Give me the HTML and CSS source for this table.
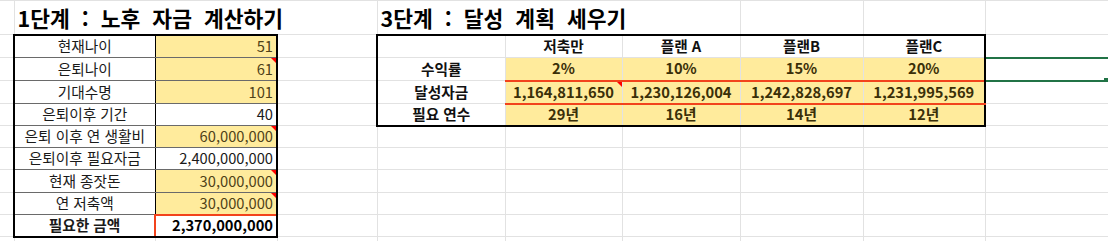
FILE: index.html
```html
<!DOCTYPE html>
<html lang="ko">
<head>
<meta charset="utf-8">
<title>노후 자금 계산</title>
<link rel="stylesheet" href="styles.css">
</head>
<body>
<table class="sheet">
  <colgroup>
    <col class="ca"><col class="cb"><col class="cc"><col class="cd"><col class="ce">
    <col class="cf"><col class="cg"><col class="ch"><col class="ci"><col class="cj">
  </colgroup>
  <tr class="h34">
    <td></td>
    <td colspan="3" class="title">1단계 : 노후 자금 계산하기</td>
    <td colspan="3" class="title">3단계 : 달성 계획 세우기</td>
    <td></td><td></td><td></td>
  </tr>
  <tr class="h23">
    <td></td>
    <td class="lbl lt-top">현재나이</td>
    <td class="val yel lt-top">51</td>
    <td></td>
    <td class="rt rt-top rt-l"></td>
    <td class="rt rt-top bold">저축만</td>
    <td class="rt rt-top bold">플랜 A</td>
    <td class="rt rt-top bold">플랜B</td>
    <td class="rt rt-top rt-r bold">플랜C</td>
    <td></td>
  </tr>
  <tr class="h23">
    <td></td>
    <td class="lbl">은퇴나이</td>
    <td class="val yel note">61</td>
    <td></td>
    <td class="rt rt-l bold">수익률</td>
    <td class="rt yel bold">2%</td>
    <td class="rt yel bold">10%</td>
    <td class="rt yel bold">15%</td>
    <td class="rt yel rt-r bold">20%</td>
    <td class="sel"><span class="handle"></span></td>
  </tr>
  <tr class="h23">
    <td></td>
    <td class="lbl">기대수명</td>
    <td class="val yel">101</td>
    <td></td>
    <td class="rt rt-l bold">달성자금</td>
    <td class="rt yel bold red-cell note">1,164,811,650</td>
    <td class="rt yel bold red-cell">1,230,126,004</td>
    <td class="rt yel bold red-cell">1,242,828,697</td>
    <td class="rt yel bold red-cell rt-r">1,231,995,569</td>
    <td></td>
  </tr>
  <tr class="h22">
    <td></td>
    <td class="lbl">은퇴이후 기간</td>
    <td class="val">40</td>
    <td></td>
    <td class="rt rt-l rt-bot bold">필요 연수</td>
    <td class="rt yel rt-bot bold">29년</td>
    <td class="rt yel rt-bot bold">16년</td>
    <td class="rt yel rt-bot bold">14년</td>
    <td class="rt yel rt-bot rt-r bold">12년</td>
    <td></td>
  </tr>
  <tr class="h22">
    <td></td>
    <td class="lbl">은퇴 이후 연 생활비</td>
    <td class="val yel note">60,000,000</td>
    <td></td><td></td><td></td><td></td><td></td><td></td><td></td>
  </tr>
  <tr class="h22">
    <td></td>
    <td class="lbl">은퇴이후 필요자금</td>
    <td class="val">2,400,000,000</td>
    <td></td><td></td><td></td><td></td><td></td><td></td><td></td>
  </tr>
  <tr class="h23">
    <td></td>
    <td class="lbl">현재 종잣돈</td>
    <td class="val yel note">30,000,000</td>
    <td></td><td></td><td></td><td></td><td></td><td></td><td></td>
  </tr>
  <tr class="h22">
    <td></td>
    <td class="lbl">연 저축액</td>
    <td class="val yel note">30,000,000</td>
    <td></td><td></td><td></td><td></td><td></td><td></td><td></td>
  </tr>
  <tr class="h22">
    <td></td>
    <td class="lbl lt-bot bold">필요한 금액</td>
    <td class="val lt-bot total bold">2,370,000,000</td>
    <td></td><td></td><td></td><td></td><td></td><td></td><td></td>
  </tr>
  <tr class="h4">
    <td></td><td></td><td></td><td></td><td></td><td></td><td></td><td></td><td></td><td></td>
  </tr>
</table>
</body>
</html>
```

FILE: styles.css
```css
html, body {
  margin: 0;
  padding: 0;
  background: #ffffff;
}

body {
  width: 1108px;
  height: 241px;
  overflow: hidden;
  font-family: "Noto Sans CJK KR", "Noto Sans", sans-serif;
}

.sheet {
  border-collapse: collapse;
  table-layout: fixed;
  width: 1110px;
  font-size: 14.7px;
  color: #1a1a1a;
}

.ca { width: 14px; }
.cb { width: 141px; }
.cc { width: 122px; }
.cd { width: 100px; }
.ce { width: 128px; }
.cf { width: 117px; }
.cg { width: 118px; }
.ch { width: 123px; }
.ci { width: 122px; }
.cj { width: 125px; }

.h34 { height: 34px; }
.h23 { height: 23px; }
.h22 { height: 22px; }
.h4 { height: 4px; }

.sheet td {
  border: 1px solid #e2e2e2;
  padding: 0 3px;
  white-space: nowrap;
  overflow: hidden;
  position: relative;
  line-height: 1;
  vertical-align: middle;
}

.h4 td {
  border-bottom: none;
}

.sheet td:first-child {
  border-left: none;
}

.sheet tr:first-child td {
  border-top: 1px solid #e2e2e2;
}

.title {
  font-size: 21.5px;
  font-weight: 700;
  word-spacing: 6px;
  color: #000;
  padding-left: 4px;
}

.bold { font-weight: 700; }

/* left table */
.lbl {
  text-align: center;
  border-left: 2px solid #000 !important;
  border-right: 1px solid #000 !important;
  border-bottom: 1px solid #6a6a6a !important;
}

.val {
  text-align: right;
  border-right: 2px solid #000 !important;
  border-bottom: 1px solid #6a6a6a !important;
}

.lt-top { border-top: 2px solid #000 !important; }
.lt-bot { border-bottom: 2px solid #000 !important; }

.total {
  border-top: 2px solid #f2431c !important;
  border-left: 2px solid #f2431c !important;
  color: #000;
}

.yel {
  background: #ffeb9c;
  color: #4f4218;
}

/* right table */
.rt {
  text-align: center;
  border-right: 1px solid #6a6a6a;
  border-bottom: 1px solid #6a6a6a;
  color: #111;
}

.rt.yel { color: #3a2f08; }

.rt-top { border-top: 2px solid #000 !important; }
.rt-bot { border-bottom: 2px solid #000 !important; }
.rt-l { border-left: 2px solid #000 !important; }
.rt-r { border-right: 2px solid #000 !important; }

.red-cell {
  border-top: 2px solid #f2431c !important;
  border-bottom: 2px solid #f2431c !important;
  border-left: 2px solid #f2431c;
}

/* comment indicator */
.note::after {
  content: "";
  position: absolute;
  top: 0;
  right: 0;
  border-style: solid;
  border-width: 0 5px 5px 0;
  border-color: transparent #ff0000 transparent transparent;
}

/* selected cell */
.sel {
  border-top: 2px solid #217346 !important;
  border-bottom: 2px solid #217346 !important;
  border-left: 2px solid #217346;
}

.handle {
  position: absolute;
  right: 0;
  bottom: -4px;
  width: 5px;
  height: 5px;
  background: #217346;
  border: 1px solid #fff;
}
```
